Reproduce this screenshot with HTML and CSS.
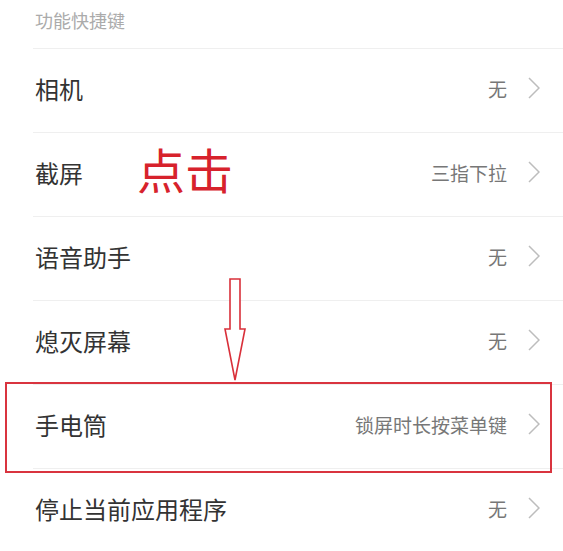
FILE: index.html
```html
<!DOCTYPE html>
<html lang="zh-CN">
<head>
  <meta charset="UTF-8" />
  <meta name="viewport" content="width=device-width, initial-scale=1.0" />
  <title>功能快捷键</title>
  <link rel="stylesheet" href="styles.css">
</head>
<body>

  <!-- Section header -->
  <div class="section-title">功能快捷键</div>

  <!-- Shortcut list -->
  <div class="list">
    <div class="row">
      <span class="label">相机</span>
      <span class="value">无</span>
      <svg class="chevron" viewBox="0 0 12 22"><polyline points="1,1 11,11 1,21" /></svg>
    </div>
    <div class="row">
      <span class="label">截屏</span>
      <span class="value">三指下拉</span>
      <svg class="chevron" viewBox="0 0 12 22"><polyline points="1,1 11,11 1,21" /></svg>
    </div>
    <div class="row">
      <span class="label">语音助手</span>
      <span class="value">无</span>
      <svg class="chevron" viewBox="0 0 12 22"><polyline points="1,1 11,11 1,21" /></svg>
    </div>
    <div class="row">
      <span class="label">熄灭屏幕</span>
      <span class="value">无</span>
      <svg class="chevron" viewBox="0 0 12 22"><polyline points="1,1 11,11 1,21" /></svg>
    </div>
    <div class="row">
      <span class="label">手电筒</span>
      <span class="value">锁屏时长按菜单键</span>
      <svg class="chevron" viewBox="0 0 12 22"><polyline points="1,1 11,11 1,21" /></svg>
    </div>
    <div class="row">
      <span class="label">停止当前应用程序</span>
      <span class="value">无</span>
      <svg class="chevron" viewBox="0 0 12 22"><polyline points="1,1 11,11 1,21" /></svg>
    </div>
  </div>

  <!-- Annotations drawn over the screenshot -->
  <div class="note-text">点击</div>
  <svg class="note-arrow" viewBox="0 0 24 104">
    <polygon points="6,1 16,1 16,51 21,51 11,102 1,51 6,51" />
  </svg>
  <div class="note-box"></div>

</body>
</html>
```

FILE: styles.css
```css
body {
  margin: 0;
  padding: 0;
  background: #fff;
  font-family: "Noto Sans CJK SC", "Noto Sans", sans-serif;
  position: relative;
  width: 563px;
  height: 551px;
  overflow: hidden;
}
.section-title {
  height: 48px;
  padding-left: 35px;
  box-sizing: border-box;
  padding-top: 7px;
  font-size: 18px;
  line-height: 26px;
  color: #ababab;
}
.list {
  margin-left: 33px;
}
.row {
  height: 84px;
  box-sizing: border-box;
  display: flex;
  align-items: center;
  border-top: 1px solid #efefef;
  padding: 0 23px 5px 2px;
}
.label {
  flex: 1;
  font-size: 24px;
  color: #333;
}
.value {
  font-size: 19px;
  color: #777;
  margin-right: 21px;
}
.chevron {
  width: 12px;
  height: 22px;
}
.chevron polyline {
  fill: none;
  stroke: #bdbdbd;
  stroke-width: 1.5;
}
.note-text {
  position: absolute;
  left: 137px;
  top: 142px;
  font-size: 48px;
  line-height: 1.1;
  color: #d7222c;
}
.note-arrow {
  position: absolute;
  left: 224px;
  top: 278px;
  width: 24px;
  height: 104px;
}
.note-arrow polygon {
  fill: #fff;
  stroke: #d9303a;
  stroke-width: 1.6;
}
.note-box {
  position: absolute;
  left: 5px;
  top: 382px;
  width: 547px;
  height: 91px;
  box-sizing: border-box;
  border: 2px solid #d9343f;
}
```
